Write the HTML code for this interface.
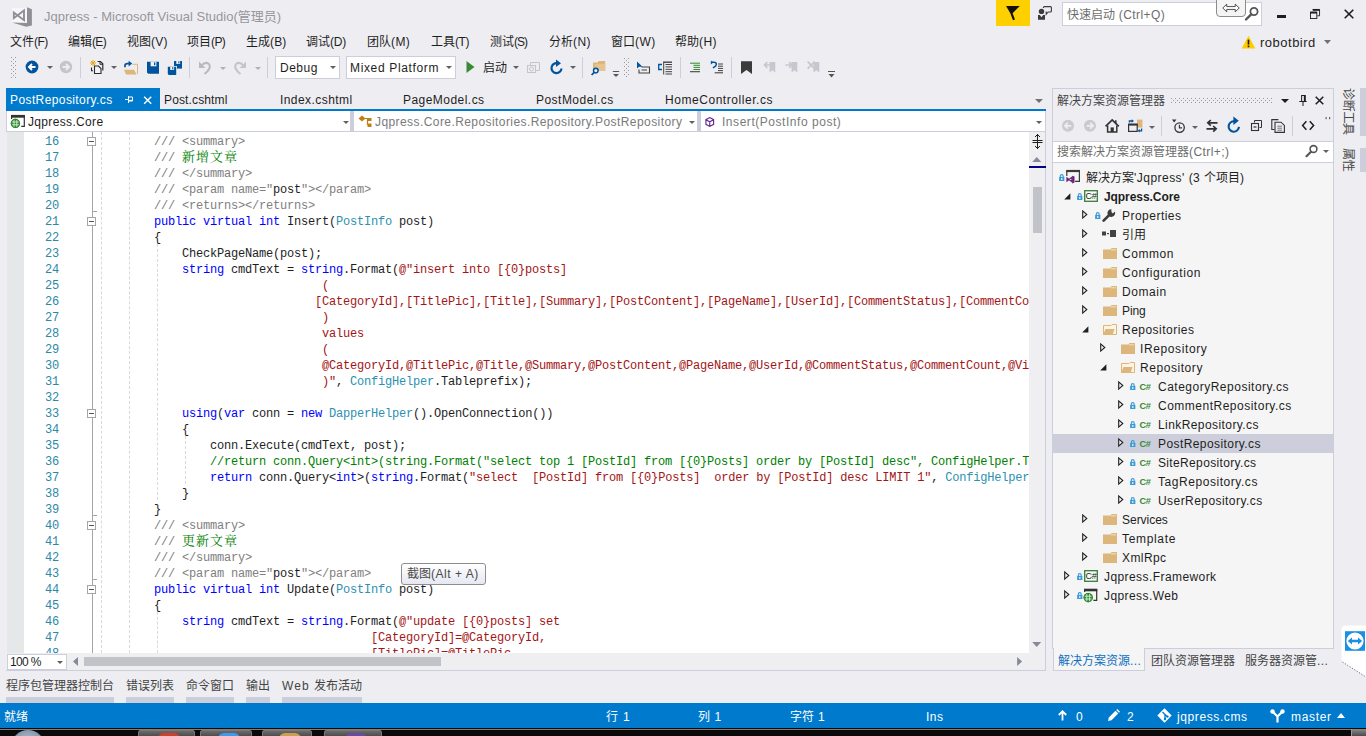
<!DOCTYPE html><html lang="zh-CN"><head><meta charset="utf-8"><title>Jqpress - Microsoft Visual Studio</title><style>
*{box-sizing:border-box;margin:0;padding:0}
html,body{width:1366px;height:736px;overflow:hidden;background:#eeeef2}
body{position:relative;font-family:"Liberation Sans","Noto Sans CJK SC",sans-serif;font-size:12px;color:#1e1e1e}
.a{position:absolute}
.t{position:absolute;white-space:nowrap;line-height:16px}
.l{letter-spacing:0.42px}
svg{position:absolute;overflow:visible}
.menu .t{font-size:12px;top:34px}
.tab{position:absolute;top:92px;font-size:12px;white-space:nowrap;line-height:16px}
.code{position:absolute;font-family:"Liberation Mono","Noto Serif CJK SC",monospace;font-size:12px;letter-spacing:-0.2px;white-space:pre;line-height:16px;height:16px}
.code .cj{font-size:13px;letter-spacing:1px}
.ln{position:absolute;left:19px;width:33px;text-align:right;font-family:"Liberation Mono","Noto Serif CJK SC",monospace;font-size:12px;letter-spacing:-0.2px;color:#2b89a6;line-height:16px;height:16px}
.k{color:#0000ff}.s{color:#a31515}.c{color:#008000}.x{color:#808080}.y{color:#2b91af}
.tree{position:absolute;left:1053px;width:280px;height:19px;line-height:19px;font-size:12px;white-space:nowrap}
.tree .t{line-height:19px;top:1px}
.sb .t{color:#fff;font-size:12px;top:709px}
#bt4 .l{letter-spacing:1.06px}#debug .l{letter-spacing:0.49px}#m0 .l{letter-spacing:-0.57px}#m1 .l{letter-spacing:-0.66px}#m2 .l{letter-spacing:0.19px}#m3 .l{letter-spacing:-0.61px}#m4 .l{letter-spacing:0.14px}#m5 .l{letter-spacing:-0.18px}#m7 .l{letter-spacing:-0.47px}#m8 .l{letter-spacing:-1.01px}#mixed .l{letter-spacing:0.65px}#nav0 .l{letter-spacing:0.34px}#nav1 .l{letter-spacing:0.42px}#nav2 .l{letter-spacing:0.54px}#sb1 .l{letter-spacing:1.58px}#sb2 .l{letter-spacing:1.27px}#sb3 .l{letter-spacing:0.67px}#sb4 .l{letter-spacing:0.49px}#sb7 .l{letter-spacing:0.60px}#sb8 .l{letter-spacing:0.66px}#tab0 .l{letter-spacing:0.40px}#tab1 .l{letter-spacing:0.13px}#tab2 .l{letter-spacing:0.43px}#tab3 .l{letter-spacing:0.46px}#tab4 .l{letter-spacing:0.47px}#tab5 .l{letter-spacing:0.55px}#tip .l{letter-spacing:0.52px}#title .l{letter-spacing:0.01px}#tr0 .l{letter-spacing:0.47px}#tr1 .l{letter-spacing:-0.07px}#tr10 .l{letter-spacing:0.56px}#tr11 .l{letter-spacing:0.50px}#tr12 .l{letter-spacing:0.50px}#tr15 .l{letter-spacing:0.35px}#tr16 .l{letter-spacing:0.55px}#tr17 .l{letter-spacing:0.44px}#tr18 .l{letter-spacing:-0.02px}#tr19 .l{letter-spacing:0.67px}#tr2 .l{letter-spacing:0.48px}#tr4 .l{letter-spacing:0.56px}#tr5 .l{letter-spacing:0.58px}#tr6 .l{letter-spacing:0.56px}#tr7 .l{letter-spacing:-0.11px}#tr8 .l{letter-spacing:0.48px}#tr9 .l{letter-spacing:0.61px}#user .l{letter-spacing:0.50px}#zoom .l{letter-spacing:-0.68px}</style></head><body>
<div class="a" style="left:0;top:0;width:1366px;height:31px;background:#eeeef2"></div>
<svg style="left:0;top:0" width="40" height="32" viewBox="0 0 40 32"><rect x="12" y="8" width="15" height="15" fill="#f7f7f9"/><path d="M13.8 12.6 L24 20.2 V10.4 L13.8 18.2 Z" fill="none" stroke="#8f8f97" stroke-width="1.9" stroke-linejoin="miter"/><path d="M27 7.2 L31.9 9.3 V25.5 L26.2 26.7 L12 22.5 L27 23 Z" fill="#8f8f97"/></svg>
<div class="t" id="title" style="left:44px;top:9px;font-size:13px;color:#96969c"><span class="l">Jqpress - Microsoft Visual Studio(</span>管理员<span class="l">)</span></div>
<div class="a" style="left:996px;top:0;width:34px;height:26px;background:#ffd000"></div>
<svg style="left:990px;top:0" width="80" height="30" viewBox="990 0 80 30"><path d="M1006 6 H1019.8 L1012.6 13.2 L1015 19.6 L1013 20.3 L1010.2 13 Z" fill="#151008"/><circle cx="1041.5" cy="11.4" r="2.7" fill="#3b3b3b"/><path d="M1038 15 H1039.8 L1041.5 17.3 L1043.2 15 H1045 V19.7 H1038 Z" fill="#3b3b3b"/><path d="M1043.4 8 V7.6 Q1043.4 6.6 1044.4 6.6 H1050.4 Q1051.4 6.6 1051.4 7.6 V11 Q1051.4 12 1050.4 12 H1048.2 L1046.2 14.3 V12 H1045.6" fill="none" stroke="#3b3b3b" stroke-width="1.1"/></svg>
<div class="a" style="left:1062px;top:2px;width:200px;height:24px;background:#fff;border:1px solid #cccedb"></div>
<div class="t" id="ql" style="left:1067px;top:7px;font-size:12px;color:#6d6d6d">快速启动<span class="l"> (Ctrl+Q)</span></div>
<svg style="left:1244px;top:6px" width="16" height="16" viewBox="0 0 16 16"><circle cx="10" cy="5.5" r="3.6" fill="none" stroke="#555" stroke-width="1.8"/><path d="M7.2 8.3 L2 13.5" stroke="#555" stroke-width="2.4" stroke-linecap="round"/></svg>
<div class="a" style="left:1216px;top:-4px;width:30px;height:21px;background:#f4f4f4;border:1px solid #8c8c8c;border-radius:4px"></div>
<svg style="left:1222px;top:2.5px" width="18" height="10" viewBox="0 0 19 10"><path d="M0.8 5 L5 1 V3.5 H14 V1 L18.2 5 L14 9 V6.5 H5 V9 Z" fill="#fff" stroke="#333" stroke-width="0.9"/></svg>
<div class="a" style="left:1277px;top:15px;width:9px;height:3px;background:#1e1e1e"></div>
<svg style="left:1310px;top:9px" width="10" height="10" viewBox="0 0 11 11"><path d="M3 0.5 H10.5 V7.5 H8" fill="none" stroke="#1e1e1e" stroke-width="1"/><path d="M3 1 H10.5" stroke="#1e1e1e" stroke-width="2"/><rect x="0.5" y="3.5" width="7" height="7" fill="none" stroke="#1e1e1e"/><path d="M0.5 4 H7.5" stroke="#1e1e1e" stroke-width="2"/></svg>
<svg style="left:1344px;top:9px" width="10" height="10" viewBox="0 0 10 10"><path d="M0.7 0.7 L9.3 9.3 M9.3 0.7 L0.7 9.3" stroke="#1e1e1e" stroke-width="1.6"/></svg>
<div class="menu">
<div class="t" id="m0" style="left:10px">文件<span class="l">(F)</span></div>
<div class="t" id="m1" style="left:68px">编辑<span class="l">(E)</span></div>
<div class="t" id="m2" style="left:127px">视图<span class="l">(V)</span></div>
<div class="t" id="m3" style="left:187px">项目<span class="l">(P)</span></div>
<div class="t" id="m4" style="left:246px">生成<span class="l">(B)</span></div>
<div class="t" id="m5" style="left:306px">调试<span class="l">(D)</span></div>
<div class="t" id="m6" style="left:367px">团队<span class="l">(M)</span></div>
<div class="t" id="m7" style="left:431px">工具<span class="l">(T)</span></div>
<div class="t" id="m8" style="left:490px">测试<span class="l">(S)</span></div>
<div class="t" id="m9" style="left:549px">分析<span class="l">(N)</span></div>
<div class="t" id="m10" style="left:611px">窗口<span class="l">(W)</span></div>
<div class="t" id="m11" style="left:675px">帮助<span class="l">(H)</span></div>
</div>
<svg style="left:1240.5px;top:35px" width="15" height="14.5" viewBox="0 0 14 14"><path d="M7 0.8 L13.6 13 H0.4 Z" fill="#ffcc00"/><path d="M7 4.5 V9.3" stroke="#1e1e1e" stroke-width="1.6"/><rect x="6.2" y="10.2" width="1.6" height="1.6" fill="#1e1e1e"/></svg>
<div class="t" id="user" style="left:1260px;top:35px;font-size:13px;color:#1e1e1e"><span class="l">robotbird</span></div>
<svg style="left:1324px;top:40px" width="7" height="4" viewBox="0 0 7 4"><path d="M0 0 H7 L3.5 4 Z" fill="#717171"/></svg>
<svg style="left:11px;top:57px" width="6" height="21"><defs><pattern id="gp11" width="4" height="4" patternUnits="userSpaceOnUse"><rect x="0" y="0" width="1" height="1" fill="#999"/><rect x="2" y="2" width="1" height="1" fill="#999"/></pattern></defs><rect width="6" height="21" fill="url(#gp11)"/></svg>
<svg style="left:25px;top:60px" width="14" height="14" viewBox="0 0 14 14"><circle cx="7" cy="7" r="6.4" fill="#00539c"/><path d="M10.5 7 H4.5 M7 4 L4 7 L7 10" fill="none" stroke="#fff" stroke-width="1.9"/></svg>
<svg style="left:46.5px;top:66px" width="6" height="3" viewBox="0 0 6 3"><path d="M0 0 H6 L3 3 Z" fill="#616161"/></svg>
<svg style="left:59px;top:60px" width="14" height="14" viewBox="0 0 14 14"><circle cx="7" cy="7" r="6.2" fill="#c3c4cc"/><path d="M3.5 7 H9.5 M7 4 L10 7 L7 10" fill="none" stroke="#eeeef2" stroke-width="1.9"/></svg>
<div class="a" style="left:80px;top:57px;width:1px;height:21px;background:#cccedb"></div>
<svg style="left:86px;top:54px" width="104" height="28" viewBox="86 54 104 28"><path d="M93 60 V66 M90 63 H96 M90.9 60.9 L95.1 65.1 M95.1 60.9 L90.9 65.1" stroke="#e8a317" stroke-width="1"/><path d="M97.5 61.5 H100.5 L102.8 63.8 V70.5" fill="none" stroke="#2b2b2b" stroke-width="1.2"/><path d="M100 61.5 V64.3 H102.8" fill="none" stroke="#2b2b2b" stroke-width="1"/><path d="M94.5 66 H98.5 L101 68.5 V73.5 H94.5 Z" fill="#f3f3f6" stroke="#2b2b2b" stroke-width="1.1"/><path d="M91.5 67.5 V70.8 H93" fill="none" stroke="#2b2b2b" stroke-width="1.1"/><path d="M132.5 64.3 H137.5 V74" fill="none" stroke="#dcb67a" stroke-width="1"/><path d="M124 69.8 H134 L136.6 74.5 H126 Z" fill="#dcb67a"/><path d="M125 67.2 V65.6 Q125 63.6 127.5 63.6 H129.3" fill="none" stroke="#00539c" stroke-width="1.7"/><path d="M128.6 60.8 L132.2 63.6 L128.6 66.4 Z" fill="#00539c"/><path d="M147 61.7 H159 V73.8 H148.3 L147 72.5 Z" fill="#00539c"/><rect x="150.6" y="61.7" width="5.8" height="4.6" fill="#f3f3f6"/><rect x="154" y="62.4" width="1.3" height="2.8" fill="#00539c"/><path d="M174 61 H182 V68.6 H174 Z" fill="#00539c"/><rect x="176.3" y="61" width="3.8" height="2.9" fill="#f3f3f6"/><rect x="178.3" y="61.3" width="1.1" height="2" fill="#00539c"/><path d="M167 66 H177 V75.6 H167 Z" fill="#eeeef2"/><path d="M167.8 66.8 H176.2 V75 H168.8 L167.8 74 Z" fill="#00539c"/><rect x="170.2" y="66.8" width="3.9" height="3.1" fill="#f3f3f6"/><rect x="172.2" y="67.2" width="1.1" height="2.1" fill="#00539c"/></svg>
<svg style="left:110.5px;top:66px" width="6" height="3" viewBox="0 0 6 3"><path d="M0 0 H6 L3 3 Z" fill="#616161"/></svg>
<div class="a" style="left:189px;top:57px;width:1px;height:21px;background:#cccedb"></div>
<svg style="left:198px;top:60px" width="14" height="15" viewBox="0 0 14 15"><path d="M3 6 Q7 1 11 4 Q14 8 6.5 14" fill="none" stroke="#b8b9c2" stroke-width="2"/><path d="M1 1.5 V8 H7.5 Z" fill="#b8b9c2"/></svg>
<svg style="left:219.5px;top:67px" width="6" height="3" viewBox="0 0 6 3"><path d="M0 0 H6 L3 3 Z" fill="#b0b1ba"/></svg>
<svg style="left:233px;top:60px" width="14" height="15" viewBox="0 0 14 15"><path d="M11 6 Q7 1 3 4 Q0 8 7.5 14" fill="none" stroke="#c3c4cc" stroke-width="2"/><path d="M13 1.5 V8 H6.5 Z" fill="#c3c4cc"/></svg>
<svg style="left:254.5px;top:67px" width="6" height="3" viewBox="0 0 6 3"><path d="M0 0 H6 L3 3 Z" fill="#b0b1ba"/></svg>
<div class="a" style="left:267px;top:57px;width:1px;height:21px;background:#cccedb"></div>
<div class="a" style="left:275px;top:56px;width:65px;height:23px;background:#fff;border:1px solid #cccedb"></div>
<div class="t" id="debug" style="left:280px;top:60px;font-size:12px"><span class="l">Debug</span></div>
<svg style="left:329.5px;top:66px" width="6" height="3" viewBox="0 0 6 3"><path d="M0 0 H6 L3 3 Z" fill="#616161"/></svg>
<div class="a" style="left:346px;top:56px;width:110px;height:23px;background:#fff;border:1px solid #cccedb"></div>
<div class="t" id="mixed" style="left:350px;top:60px;font-size:12px"><span class="l">Mixed Platform</span></div>
<svg style="left:445.5px;top:66px" width="6" height="3" viewBox="0 0 6 3"><path d="M0 0 H6 L3 3 Z" fill="#616161"/></svg>
<svg style="left:466px;top:61px" width="9" height="12" viewBox="0 0 9 12"><path d="M0.5 0 L8.5 6 L0.5 12 Z" fill="#388a34"/></svg>
<div class="t" id="start" style="left:483px;top:60px;font-size:12px">启动</div>
<svg style="left:512.5px;top:66px" width="6" height="3" viewBox="0 0 6 3"><path d="M0 0 H6 L3 3 Z" fill="#616161"/></svg>
<svg style="left:527px;top:62px" width="13" height="11" viewBox="0 0 13 11"><path d="M3.5 3 V0.5 H12.5 V8.5 H9" fill="none" stroke="#c3c4cc"/><rect x="0.5" y="3.5" width="8" height="7" fill="none" stroke="#c3c4cc"/><circle cx="4.5" cy="7" r="2" fill="none" stroke="#c3c4cc"/></svg>
<svg style="left:549px;top:59px" width="15" height="16" viewBox="0 0 15 16"><path d="M8.5 4.2 A5 5 0 1 0 12.5 9.5" fill="none" stroke="#00539c" stroke-width="2.2"/><path d="M7 0.5 L12 4.2 L7 8 Z" fill="#00539c"/></svg>
<svg style="left:569.5px;top:66px" width="6" height="3" viewBox="0 0 6 3"><path d="M0 0 H6 L3 3 Z" fill="#616161"/></svg>
<svg style="left:580px;top:54px" width="160" height="28" viewBox="580 54 160 28"><path d="M593 62.5 H597.5 L598.5 61 H605.2 V71 H593 Z" fill="#dcb67a"/><path d="M595 64 H605.2 V71 H595 Z" fill="#e5c48f"/><circle cx="595.8" cy="70.6" r="2.3" fill="#eeeef2" stroke="#00539c" stroke-width="1.5"/><path d="M594.2 72.3 L591.6 75" stroke="#00539c" stroke-width="1.8"/><path d="M612.8 71.5 H619.2" stroke="#555" stroke-width="1"/><path d="M613 74 H619 L616 77 Z" fill="#555"/><path d="M637 61.5 V68.5 L639 66.8 H642.5 Z" fill="#00539c"/><path d="M641.5 67 H649.5 V73 H639 V69.5" fill="none" stroke="#424242" stroke-width="1.1"/><path d="M641.5 70 H647" stroke="#424242" stroke-width="1"/><path d="M662 64.5 H658.7 V69.5 H662" fill="none" stroke="#00539c" stroke-width="1.3"/><path d="M663.7 61.5 V74.5" stroke="#424242" stroke-width="1"/><path d="M663.7 62.2 H672" stroke="#424242" stroke-width="1.4"/><path d="M665.5 64.5 H672 M665.5 66.9 H672 M665.5 69.3 H672 M665.5 71.7 H672 M665.5 74 H672" stroke="#424242" stroke-width="1"/><path d="M690 63.2 H700 M693.5 65.3 H700 M693.5 67.4 H700 M693.5 69.5 H700" stroke="#2d8a2d" stroke-width="1"/><path d="M690 71.7 H700" stroke="#424242" stroke-width="1.1"/><path d="M711.5 62.3 H714 Q716.3 62.3 716.3 64.3 Q716.3 66 714.3 67 L713 68" fill="none" stroke="#00539c" stroke-width="1.5"/><path d="M710.8 60.6 V64.6 L713.3 62.6 Z" fill="#00539c"/><path d="M718 64 H723 M718 66.2 H723 M718 68.4 H723 M718 70.6 H723" stroke="#424242" stroke-width="1"/><path d="M714.7 72.8 H723" stroke="#424242" stroke-width="1.1"/></svg>
<svg style="left:624px;top:58px" width="6" height="20"><defs><pattern id="gp624" width="4" height="4" patternUnits="userSpaceOnUse"><rect x="0" y="0" width="1" height="1" fill="#999"/><rect x="2" y="2" width="1" height="1" fill="#999"/></pattern></defs><rect width="6" height="20" fill="url(#gp624)"/></svg>
<div class="a" style="left:582px;top:57px;width:1px;height:21px;background:#cccedb"></div>
<div class="a" style="left:680px;top:57px;width:1px;height:21px;background:#cccedb"></div>
<div class="a" style="left:731px;top:57px;width:1px;height:21px;background:#cccedb"></div>
<svg style="left:741px;top:61px" width="11" height="13.4" viewBox="0 0 12 14"><path d="M0 0 H12 V14 L6 9.5 L0 14 Z" fill="#3b3b3b"/></svg>
<svg style="left:755px;top:54px" width="90" height="28" viewBox="755 54 90 28"><path d="M769.5 62 H775.3 V72.6 L772.4 70.2 L769.5 72.6 Z" fill="#c6c7cf"/><path d="M771 65 H764.6 M767.4 62.2 L764.4 65 L767.4 67.8" fill="none" stroke="#c6c7cf" stroke-width="1.6"/><path d="M791.5 62 H797.3 V72.6 L794.4 70.2 L791.5 72.6 Z" fill="#c6c7cf"/><path d="M785.4 65 H792 M789 62.2 L792 65 L789 67.8" fill="none" stroke="#c6c7cf" stroke-width="1.6"/><path d="M813.5 62 H819.3 V72.6 L816.4 70.2 L813.5 72.6 Z" fill="#c6c7cf"/><path d="M807.6 61.6 L814.6 68.6 M814.6 61.6 L807.6 68.6" fill="none" stroke="#c6c7cf" stroke-width="1.6"/></svg>
<svg style="left:828px;top:71px" width="7" height="7" viewBox="0 0 7 7"><path d="M0 0.5 H7" stroke="#555"/><path d="M0.5 3 H6.5 L3.5 6.5 Z" fill="#555"/></svg>
<div class="a" style="left:6px;top:88px;width:154px;height:21px;background:#007acc"></div>
<div class="tab" id="tab0" style="left:10px;color:#fff"><span class="l">PostRepository.cs</span></div>
<svg style="left:125px;top:96px" width="8" height="7" viewBox="0 0 8 7"><path d="M0 3.5 H3.5 M3.5 0 V7 M3.5 1 H7.5 V5 H3.5 M3.5 4.4 H7.5" fill="none" stroke="#fff" stroke-width="1"/></svg>
<svg style="left:143.4px;top:95.8px" width="9.4" height="8.4" viewBox="0 0 9 9"><path d="M0.7 0.7 L8.3 8.3 M8.3 0.7 L0.7 8.3" stroke="#fff" stroke-width="1.5"/></svg>
<div class="tab" id="tab1" style="left:164px"><span class="l">Post.cshtml</span></div>
<div class="tab" id="tab2" style="left:280px"><span class="l">Index.cshtml</span></div>
<div class="tab" id="tab3" style="left:403px"><span class="l">PageModel.cs</span></div>
<div class="tab" id="tab4" style="left:536px"><span class="l">PostModel.cs</span></div>
<div class="tab" id="tab5" style="left:665px"><span class="l">HomeController.cs</span></div>
<svg style="left:1035px;top:99px" width="8" height="4" viewBox="0 0 8 4"><path d="M0 0 H8 L4 4 Z" fill="#717171"/></svg>
<div class="a" style="left:6px;top:109px;width:1040px;height:2px;background:#007acc"></div>
<div class="a" style="left:6px;top:111px;width:1040px;height:21px;background:#fff;border-bottom:1px solid #cccedb;border-left:1px solid #cccedb;border-right:1px solid #cccedb"></div>
<div class="a" style="left:350px;top:111px;width:4px;height:20px;background:#cccedb"></div>
<div class="a" style="left:697px;top:111px;width:4px;height:20px;background:#cccedb"></div>
<svg style="left:4px;top:110px" width="40" height="24" viewBox="4 110 40 24"><path d="M11.6 119 V116 H24.3 V126.3 H21.2" fill="none" stroke="#333" stroke-width="1.2"/><path d="M11 116.3 H24.9" stroke="#333" stroke-width="2.8"/><circle cx="15.4" cy="123.4" r="4.6" fill="#2e8b2e"/><path d="M14 119.6 V127.2 M16.8 119.6 V127.2 M11.4 122 H19.4 M11.4 124.8 H19.4" stroke="#fff" stroke-width="0.9" opacity="0.85"/><circle cx="15.4" cy="123.4" r="4.2" fill="none" stroke="#2e8b2e" stroke-width="1"/></svg>
<div class="t" id="nav0" style="left:28px;top:114px;color:#1e1e1e"><span class="l">Jqpress.Core</span></div>
<svg style="left:342.5px;top:121px" width="6" height="3" viewBox="0 0 6 3"><path d="M0 0 H6 L3 3 Z" fill="#616161"/></svg>
<svg style="left:358px;top:115px" width="14" height="13" viewBox="0 0 14 13"><path d="M4 0.5 L7.5 3.5 L4 6.5 L0.5 3.5 Z" fill="#c27d1a"/><path d="M7 3.5 H9.5 V9.5 H11" fill="none" stroke="#c27d1a" stroke-width="1.2"/><rect x="9.5" y="3" width="4" height="3" fill="#c27d1a"/><rect x="9.5" y="8.5" width="4" height="3.5" fill="#c27d1a"/></svg>
<div class="t" id="nav1" style="left:375px;top:114px;color:#7a7a7a"><span class="l">Jqpress.Core.Repositories.Repository.PostRepository</span></div>
<svg style="left:688.5px;top:121px" width="6" height="3" viewBox="0 0 6 3"><path d="M0 0 H6 L3 3 Z" fill="#616161"/></svg>
<svg style="left:705px;top:116.5px" width="9.5" height="10" viewBox="0 0 12 13"><path d="M6 0.8 L11 3.5 V9.5 L6 12.2 L1 9.5 V3.5 Z M1 3.5 L6 6.3 L11 3.5 M6 6.3 V12.2" fill="none" stroke="#652d90" stroke-width="1.5"/></svg>
<div class="t" id="nav2" style="left:722px;top:114px;color:#7a7a7a"><span class="l">Insert(PostInfo post)</span></div>
<svg style="left:1035.5px;top:121px" width="6" height="3" viewBox="0 0 6 3"><path d="M0 0 H6 L3 3 Z" fill="#616161"/></svg>
<div class="a" id="ed" style="left:7px;top:132px;width:1022px;height:521px;background:#fff;overflow:hidden">
<div class="a" style="left:0;top:0;width:17px;height:521px;background:#e6e7e8"></div>
<div class="a" style="left:85px;top:0;width:1px;height:522px;background:#a5a5a5"></div>
<div class="a" style="left:94px;top:0;width:0;height:521px;border-left:1px dashed #d9d9d9"></div>
<div class="a" style="left:122px;top:0;width:0;height:521px;border-left:1px dashed #d9d9d9"></div>
<div class="a" style="left:150px;top:112px;width:0;height:256px;border-left:1px dashed #d9d9d9"></div>
<div class="a" style="left:150px;top:480px;width:0;height:41px;border-left:1px dashed #d9d9d9"></div>
<div class="a" style="left:178px;top:304px;width:0;height:48px;border-left:1px dashed #d9d9d9"></div>
<div class="ln" style="top:2px">16</div>
<div class="a" style="left:80px;top:5px;width:9px;height:9px;background:#fff;border:1px solid #a5a5a5"></div><div class="a" style="left:82px;top:9px;width:5px;height:1px;background:#555"></div>
<div class="code" style="left:147px;top:2px"><span class="x">/// &lt;summary&gt;</span></div>
<div class="ln" style="top:18px">17</div>
<div class="code" style="left:147px;top:18px"><span class="x">/// </span><span class="c"><span class="cj">新增文章</span></span></div>
<div class="ln" style="top:34px">18</div>
<div class="code" style="left:147px;top:34px"><span class="x">/// &lt;/summary&gt;</span></div>
<div class="ln" style="top:50px">19</div>
<div class="code" style="left:147px;top:50px"><span class="x">/// &lt;param name="</span>post<span class="x">"&gt;&lt;/param&gt;</span></div>
<div class="ln" style="top:66px">20</div>
<div class="code" style="left:147px;top:66px"><span class="x">/// &lt;returns&gt;&lt;/returns&gt;</span></div>
<div class="ln" style="top:82px">21</div>
<div class="a" style="left:80px;top:85px;width:9px;height:9px;background:#fff;border:1px solid #a5a5a5"></div><div class="a" style="left:82px;top:89px;width:5px;height:1px;background:#555"></div>
<div class="code" style="left:147px;top:82px"><span class="k">public virtual int</span> Insert(<span class="y">PostInfo</span> post)</div>
<div class="ln" style="top:98px">22</div>
<div class="code" style="left:147px;top:98px">{</div>
<div class="ln" style="top:114px">23</div>
<div class="code" style="left:175px;top:114px">CheckPageName(post);</div>
<div class="ln" style="top:130px">24</div>
<div class="code" style="left:175px;top:130px"><span class="k">string</span> cmdText = <span class="k">string</span>.Format(<span class="s">@"insert into [{0}posts]</span></div>
<div class="ln" style="top:146px">25</div>
<div class="code" style="left:315px;top:146px"><span class="s">(</span></div>
<div class="ln" style="top:162px">26</div>
<div class="code" style="left:308px;top:162px"><span class="s">[CategoryId],[TitlePic],[Title],[Summary],[PostContent],[PageName],[UserId],[CommentStatus],[CommentCount],[ViewCount],[Tag],[UrlFormat],[Template],[Recommend],[Status],[TopStatus],[HideStatus],[CreateDate],[UpdateDate]</span></div>
<div class="ln" style="top:178px">27</div>
<div class="code" style="left:315px;top:178px"><span class="s">)</span></div>
<div class="ln" style="top:194px">28</div>
<div class="code" style="left:315px;top:194px"><span class="s">values</span></div>
<div class="ln" style="top:210px">29</div>
<div class="code" style="left:315px;top:210px"><span class="s">(</span></div>
<div class="ln" style="top:226px">30</div>
<div class="code" style="left:315px;top:226px"><span class="s">@CategoryId,@TitlePic,@Title,@Summary,@PostContent,@PageName,@UserId,@CommentStatus,@CommentCount,@ViewCount,@Tag,@UrlFormat,@Template,@Recommend,@Status,@TopStatus,@HideStatus,@CreateDate,@UpdateDate</span></div>
<div class="ln" style="top:242px">31</div>
<div class="code" style="left:315px;top:242px"><span class="s">)"</span>, <span class="y">ConfigHelper</span>.Tableprefix);</div>
<div class="ln" style="top:258px">32</div>
<div class="ln" style="top:274px">33</div>
<div class="a" style="left:80px;top:277px;width:9px;height:9px;background:#fff;border:1px solid #a5a5a5"></div><div class="a" style="left:82px;top:281px;width:5px;height:1px;background:#555"></div>
<div class="code" style="left:175px;top:274px"><span class="k">using</span>(<span class="k">var</span> conn = <span class="k">new</span> <span class="y">DapperHelper</span>().OpenConnection())</div>
<div class="ln" style="top:290px">34</div>
<div class="code" style="left:175px;top:290px">{</div>
<div class="ln" style="top:306px">35</div>
<div class="code" style="left:203px;top:306px">conn.Execute(cmdText, post);</div>
<div class="ln" style="top:322px">36</div>
<div class="code" style="left:203px;top:322px"><span class="c">//return conn.Query&lt;int&gt;(string.Format("select top 1 [PostId] from [{0}Posts] order by [PostId] desc", ConfigHelper.Tableprefix)).First();</span></div>
<div class="ln" style="top:338px">37</div>
<div class="code" style="left:203px;top:338px"><span class="k">return</span> conn.Query&lt;<span class="k">int</span>&gt;(<span class="k">string</span>.Format(<span class="s">"select  [PostId] from [{0}Posts]  order by [PostId] desc LIMIT 1"</span>, <span class="y">ConfigHelper</span>.Tableprefix)).First();</div>
<div class="ln" style="top:354px">38</div>
<div class="code" style="left:175px;top:354px">}</div>
<div class="ln" style="top:370px">39</div>
<div class="code" style="left:147px;top:370px">}</div>
<div class="ln" style="top:386px">40</div>
<div class="a" style="left:80px;top:389px;width:9px;height:9px;background:#fff;border:1px solid #a5a5a5"></div><div class="a" style="left:82px;top:393px;width:5px;height:1px;background:#555"></div>
<div class="code" style="left:147px;top:386px"><span class="x">/// &lt;summary&gt;</span></div>
<div class="ln" style="top:402px">41</div>
<div class="code" style="left:147px;top:402px"><span class="x">/// </span><span class="c"><span class="cj">更新文章</span></span></div>
<div class="ln" style="top:418px">42</div>
<div class="code" style="left:147px;top:418px"><span class="x">/// &lt;/summary&gt;</span></div>
<div class="ln" style="top:434px">43</div>
<div class="code" style="left:147px;top:434px"><span class="x">/// &lt;param name="</span>post<span class="x">"&gt;&lt;/param&gt;</span></div>
<div class="ln" style="top:450px">44</div>
<div class="a" style="left:80px;top:453px;width:9px;height:9px;background:#fff;border:1px solid #a5a5a5"></div><div class="a" style="left:82px;top:457px;width:5px;height:1px;background:#555"></div>
<div class="code" style="left:147px;top:450px"><span class="k">public virtual int</span> Update(<span class="y">PostInfo</span> post)</div>
<div class="ln" style="top:466px">45</div>
<div class="code" style="left:147px;top:466px">{</div>
<div class="ln" style="top:482px">46</div>
<div class="code" style="left:175px;top:482px"><span class="k">string</span> cmdText = <span class="k">string</span>.Format(<span class="s">@"update [{0}posts] set</span></div>
<div class="ln" style="top:498px">47</div>
<div class="code" style="left:364px;top:498px"><span class="s">[CategoryId]=@CategoryId,</span></div>
<div class="ln" style="top:514px">48</div>
<div class="code" style="left:364px;top:514px"><span class="s">[TitlePic]=@TitlePic,</span></div>
<div class="a" style="left:85px;top:79px;width:5px;height:1px;background:#a5a5a5"></div>
<div class="a" style="left:85px;top:383px;width:5px;height:1px;background:#a5a5a5"></div>
<div class="a" style="left:85px;top:447px;width:5px;height:1px;background:#a5a5a5"></div>
<div class="a" style="left:394px;top:431px;width:85px;height:22px;background:linear-gradient(#fff,#e6e7f2);border:1px solid #8e8e8e;border-radius:3px"></div>
<div class="t" id="tip" style="left:400px;top:434px;color:#4a4a4a">截图<span class="l">(Alt + A)</span></div>
</div>
<div class="a" style="left:1029px;top:132px;width:17px;height:539px;background:#efeff2;border-right:1px solid #cccedb;border-bottom:1px solid #cccedb"></div>
<svg style="left:1032px;top:134px" width="11" height="15" viewBox="0 0 11 15"><path d="M0.5 6.5 H10.5 M0.5 8.5 H10.5" stroke="#1e1e1e" stroke-width="1"/><path d="M5.5 0 V15" stroke="#1e1e1e"/><path d="M3 3 L5.5 0.5 L8 3 M3 12 L5.5 14.5 L8 12" fill="none" stroke="#1e1e1e"/></svg>
<svg style="left:1032px;top:156.5px" width="9.5" height="5" viewBox="0 0 9 5"><path d="M0 5 H9 L4.5 0 Z" fill="#868999"/></svg>
<div class="a" style="left:1029px;top:166px;width:17px;height:2px;background:#00008b"></div>
<div class="a" style="left:1033px;top:187px;width:9px;height:46px;background:#c2c3c9"></div>
<svg style="left:1032.3px;top:642px" width="9.4" height="5" viewBox="0 0 9 5"><path d="M0 0 H9 L4.5 5 Z" fill="#868999"/></svg>
<div class="a" style="left:6px;top:653px;width:1023px;height:18px;background:#efeff2;border-bottom:1px solid #cccedb"></div>
<div class="a" style="left:7px;top:654px;width:60px;height:16px;background:#fff;border:1px solid #cccedb"></div>
<div class="t" id="zoom" style="left:10px;top:654px;font-size:12px"><span class="l">100 %</span></div>
<svg style="left:56.5px;top:661px" width="6" height="3" viewBox="0 0 6 3"><path d="M0 0 H6 L3 3 Z" fill="#616161"/></svg>
<svg style="left:73px;top:657px" width="5" height="9" viewBox="0 0 5 9"><path d="M5 0 V9 L0 4.5 Z" fill="#868999"/></svg>
<div class="a" style="left:84px;top:657px;width:357px;height:9px;background:#c2c3c9"></div>
<svg style="left:1017px;top:657px" width="5.2" height="9" viewBox="0 0 5 9"><path d="M0 0 V9 L5 4.5 Z" fill="#868999"/></svg>
<div class="a" style="left:1052px;top:88px;width:282px;height:583px;background:#eeeef2"></div>
<div class="a" style="left:1052px;top:88px;width:282px;height:561px;border:1px solid #cccedb"></div>
<div class="t" id="setitle" style="left:1057px;top:93px;color:#444">解决方案资源管理器</div>
<svg style="left:1171px;top:98px" width="102" height="5"><defs><pattern id="gpt" width="4" height="4" patternUnits="userSpaceOnUse"><rect x="0" y="0" width="1" height="1" fill="#999"/><rect x="2" y="2" width="1" height="1" fill="#999"/></pattern></defs><rect width="102" height="5" fill="url(#gpt)"/></svg>
<svg style="left:1281px;top:99px" width="8" height="4" viewBox="0 0 8 4"><path d="M0 0 H8 L4 4 Z" fill="#1e1e1e"/></svg>
<svg style="left:1298.5px;top:95px" width="8" height="11" viewBox="0 0 8 12"><path d="M2 0.5 H6.5 V7 M2.5 0.5 V7 M5.5 0.5 V7 M0 7.2 H8 M4 7.5 V12" fill="none" stroke="#1e1e1e" stroke-width="1.1"/></svg>
<svg style="left:1315px;top:96px" width="9" height="9" viewBox="0 0 9 9"><path d="M0.7 0.7 L8.3 8.3 M8.3 0.7 L0.7 8.3" stroke="#1e1e1e" stroke-width="1.5"/></svg>
<svg style="left:1052px;top:108px" width="290" height="34" viewBox="1052 108 290 34"><circle cx="1068" cy="125.8" r="6" fill="#c9cad2"/><path d="M1071.3 125.8 H1065.3 M1067.8 122.9 L1064.9 125.8 L1067.8 128.7" fill="none" stroke="#eeeef2" stroke-width="1.8"/><circle cx="1090" cy="125.8" r="6" fill="#c9cad2"/><path d="M1086.7 125.8 H1092.7 M1090.2 122.9 L1093.1 125.8 L1090.2 128.7" fill="none" stroke="#eeeef2" stroke-width="1.8"/><path d="M1105.6 126.4 L1112.2 120 L1118.8 126.4" fill="none" stroke="#333" stroke-width="1.7"/><path d="M1107.6 125.5 V132 H1116.8 V125.5" fill="none" stroke="#333" stroke-width="1.5"/><rect x="1110.6" y="127.4" width="3.2" height="4.6" fill="#333"/><path d="M1115.8 120.2 V123.4" stroke="#333" stroke-width="1.5"/><rect x="1137" y="119.6" width="5.4" height="8" fill="#dcb67a"/><rect x="1128.6" y="124.4" width="8.6" height="7" fill="#eeeef2" stroke="#333" stroke-width="1.2"/><path d="M1128.2 124.6 H1137.6" stroke="#333" stroke-width="2"/><path d="M1129.4 122.6 V121 H1132" fill="none" stroke="#00539c" stroke-width="1.3"/><path d="M1131.6 119.2 L1134 121 L1131.6 122.8 Z" fill="#00539c"/><path d="M1141.6 128.6 V130.8 H1139.4" fill="none" stroke="#00539c" stroke-width="1.3"/><path d="M1139.8 129 L1137.4 130.8 L1139.8 132.6 Z" fill="#00539c"/><circle cx="1179.6" cy="127.6" r="4.7" fill="none" stroke="#333" stroke-width="1.3"/><path d="M1179.4 124.8 V127.9 H1182" fill="none" stroke="#333" stroke-width="1.1"/><path d="M1172 119.6 H1176.4 L1174.2 122.4 Z" fill="#333"/><path d="M1208.5 122.8 H1217.5 M1210.8 120 L1207.8 122.8 L1210.8 125.6" fill="none" stroke="#333" stroke-width="1.7"/><path d="M1206.5 128.8 H1215.5 M1213.2 126 L1216.2 128.8 L1213.2 131.6" fill="none" stroke="#333" stroke-width="1.7"/><path d="M1234.8 121.4 A5.2 5.2 0 1 0 1239 126.9" fill="none" stroke="#00539c" stroke-width="2.1"/><path d="M1233.4 116.6 L1238.8 120.8 L1233.4 125 Z" fill="#00539c"/><path d="M1254.5 122.5 V120.5 H1261.5 V127.5 H1259.5" fill="none" stroke="#333" stroke-width="1"/><rect x="1251.5" y="123.5" width="7" height="7" fill="none" stroke="#333" stroke-width="1.1"/><path d="M1253.5 127 H1256.5" stroke="#333" stroke-width="1.2"/><path d="M1274.5 129.5 H1271.8 V119.6 H1278.4" fill="none" stroke="#333" stroke-width="1.1"/><path d="M1275 122.2 H1281 L1284.4 125.4 V132.4 H1275 Z" fill="none" stroke="#333" stroke-width="1.1"/><path d="M1277.4 126.2 H1282 M1277.4 128.2 H1282 M1277.4 130.2 H1282" stroke="#444" stroke-width="0.7"/><path d="M1306.4 121.2 L1302.6 125.5 L1306.4 129.8 M1309.8 121.2 L1313.6 125.5 L1309.8 129.8" fill="none" stroke="#1e1e1e" stroke-width="1.5"/><rect x="1325.5" y="117" width="1.2" height="2.2" fill="#666"/><rect x="1329" y="117" width="1.2" height="2.2" fill="#666"/></svg>
<svg style="left:1149.2px;top:125.5px" width="6" height="3" viewBox="0 0 6 3"><path d="M0 0 H6 L3 3 Z" fill="#616161"/></svg>
<svg style="left:1192px;top:125.5px" width="6" height="3" viewBox="0 0 6 3"><path d="M0 0 H6 L3 3 Z" fill="#616161"/></svg>
<div class="a" style="left:1161px;top:116px;width:1px;height:20px;background:#cccedb"></div>
<div class="a" style="left:1292px;top:116px;width:1px;height:20px;background:#cccedb"></div>
<div class="a" style="left:1053px;top:141px;width:280px;height:22px;background:#fff;border-top:1px solid #cccedb;border-bottom:1px solid #cccedb"></div>
<div class="t" id="sesearch" style="left:1057px;top:144px;color:#6d6d6d">搜索解决方案资源管理器<span class="l">(Ctrl+;)</span></div>
<svg style="left:1305px;top:144px" width="14" height="14" viewBox="0 0 14 14"><circle cx="8.5" cy="5" r="3.4" fill="none" stroke="#555" stroke-width="1.6"/><path d="M6 7.7 L1.5 12.2" stroke="#555" stroke-width="2.2" stroke-linecap="round"/></svg>
<svg style="left:1322.5px;top:150px" width="6" height="3" viewBox="0 0 6 3"><path d="M0 0 H6 L3 3 Z" fill="#616161"/></svg>
<div class="a" style="left:1053px;top:163px;width:280px;height:485px;background:#f5f5f5"></div>
<div class="tree" style="top:168px">
<svg style="left:6px;top:6px" width="5.5" height="7" viewBox="0 0 6 8"><path d="M1.4 3.6 V2.4 Q1.4 0.7 3 0.7 Q4.6 0.7 4.6 2.4 V3.6" fill="none" stroke="#3a9bd8" stroke-width="1.2"/><rect x="0" y="3.3" width="6" height="4.7" fill="#3a9bd8"/><rect x="2.1" y="4.8" width="1.8" height="1.8" fill="#f5f5f5"/></svg>
<svg style="left:12px;top:0" width="16" height="19" viewBox="0 0 16 19"><path d="M1.8 8 V3 H14.4 V13.3 H10" fill="none" stroke="#3b3b3b" stroke-width="1.2"/><path d="M1.2 3 H15" stroke="#3b3b3b" stroke-width="2.2"/><path d="M2 9.9 L7 13.7 V9.3 L2 13.1 Z" fill="none" stroke="#68217a" stroke-width="1.25"/><path d="M7.2 7.8 L9.5 8.6 V14.6 L7.2 15.4 Z" fill="#68217a"/></svg>
<div class="t" id="tr0" style="left:33px">解决方案<span class="l">'Jqpress' (3 </span>个项目<span class="l">)</span></div>
</div>
<div class="tree" style="top:187px">
<svg style="left:11px;top:5.5px" width="7" height="7" viewBox="0 0 7 7"><path d="M6.4 0.2 V6.4 H0.2 Z" fill="#1e1e1e"/></svg>
<svg style="left:24px;top:6px" width="5.5" height="7" viewBox="0 0 6 8"><path d="M1.4 3.6 V2.4 Q1.4 0.7 3 0.7 Q4.6 0.7 4.6 2.4 V3.6" fill="none" stroke="#3a9bd8" stroke-width="1.2"/><rect x="0" y="3.3" width="6" height="4.7" fill="#3a9bd8"/><rect x="2.1" y="4.8" width="1.8" height="1.8" fill="#f5f5f5"/></svg>
<svg style="left:30px;top:3px" width="15" height="13" viewBox="0 0 15 13"><rect x="1.7" y="0.7" width="12.6" height="10.6" fill="#f4faf4" stroke="#3a7a3a" stroke-width="1.3"/><text x="8" y="9.3" font-family="Liberation Sans,sans-serif" font-size="9" text-anchor="middle" fill="#222" letter-spacing="-0.3">C#</text></svg>
<div class="t" id="tr1" style="left:51px;font-weight:bold"><span class="l">Jqpress.Core</span></div>
</div>
<div class="tree" style="top:206px">
<svg style="left:29px;top:4px" width="6" height="9" viewBox="0 0 6 9"><path d="M0.7 0.9 V8.1 L4.8 4.5 Z" fill="#f5f5f5" stroke="#1e1e1e" stroke-width="1.1"/></svg>
<svg style="left:42px;top:6px" width="5.5" height="7" viewBox="0 0 6 8"><path d="M1.4 3.6 V2.4 Q1.4 0.7 3 0.7 Q4.6 0.7 4.6 2.4 V3.6" fill="none" stroke="#3a9bd8" stroke-width="1.2"/><rect x="0" y="3.3" width="6" height="4.7" fill="#3a9bd8"/><rect x="2.1" y="4.8" width="1.8" height="1.8" fill="#f5f5f5"/></svg>
<svg style="left:49px;top:3px" width="14" height="14" viewBox="0 0 14 14"><path d="M1.6 11.6 L7.6 5.6" stroke="#3b3b3b" stroke-width="2.7" stroke-linecap="round"/><path d="M12.9 2.6 A3.9 3.9 0 1 1 9.4 0.2 L9.4 3.1 L10.9 4.4 Z" fill="#3b3b3b"/></svg>
<div class="t" id="tr2" style="left:69px"><span class="l">Properties</span></div>
</div>
<div class="tree" style="top:225px">
<svg style="left:29px;top:4px" width="6" height="9" viewBox="0 0 6 9"><path d="M0.7 0.9 V8.1 L4.8 4.5 Z" fill="#f5f5f5" stroke="#1e1e1e" stroke-width="1.1"/></svg>
<svg style="left:49px;top:5px" width="14" height="7" viewBox="0 0 14 7"><rect x="0" y="1.5" width="4" height="4" fill="#424242"/><rect x="5" y="3" width="2" height="1.2" fill="#424242"/><rect x="8" y="0" width="6" height="7" fill="#424242"/></svg>
<div class="t" id="tr3" style="left:69px">引用</div>
</div>
<div class="tree" style="top:244px">
<svg style="left:29px;top:4px" width="6" height="9" viewBox="0 0 6 9"><path d="M0.7 0.9 V8.1 L4.8 4.5 Z" fill="#f5f5f5" stroke="#1e1e1e" stroke-width="1.1"/></svg>
<svg style="left:50px;top:3.5px" width="14" height="11" viewBox="0 0 14 11"><path d="M0 1.5 H7.5 L8.5 0 H14 V11 H0 Z" fill="#dcb67a"/><path d="M8 1.8 H13.2" stroke="#f3e3c0" stroke-width="1"/></svg>
<div class="t" id="tr4" style="left:69px"><span class="l">Common</span></div>
</div>
<div class="tree" style="top:263px">
<svg style="left:29px;top:4px" width="6" height="9" viewBox="0 0 6 9"><path d="M0.7 0.9 V8.1 L4.8 4.5 Z" fill="#f5f5f5" stroke="#1e1e1e" stroke-width="1.1"/></svg>
<svg style="left:50px;top:3.5px" width="14" height="11" viewBox="0 0 14 11"><path d="M0 1.5 H7.5 L8.5 0 H14 V11 H0 Z" fill="#dcb67a"/><path d="M8 1.8 H13.2" stroke="#f3e3c0" stroke-width="1"/></svg>
<div class="t" id="tr5" style="left:69px"><span class="l">Configuration</span></div>
</div>
<div class="tree" style="top:282px">
<svg style="left:29px;top:4px" width="6" height="9" viewBox="0 0 6 9"><path d="M0.7 0.9 V8.1 L4.8 4.5 Z" fill="#f5f5f5" stroke="#1e1e1e" stroke-width="1.1"/></svg>
<svg style="left:50px;top:3.5px" width="14" height="11" viewBox="0 0 14 11"><path d="M0 1.5 H7.5 L8.5 0 H14 V11 H0 Z" fill="#dcb67a"/><path d="M8 1.8 H13.2" stroke="#f3e3c0" stroke-width="1"/></svg>
<div class="t" id="tr6" style="left:69px"><span class="l">Domain</span></div>
</div>
<div class="tree" style="top:301px">
<svg style="left:29px;top:4px" width="6" height="9" viewBox="0 0 6 9"><path d="M0.7 0.9 V8.1 L4.8 4.5 Z" fill="#f5f5f5" stroke="#1e1e1e" stroke-width="1.1"/></svg>
<svg style="left:50px;top:3.5px" width="14" height="11" viewBox="0 0 14 11"><path d="M0 1.5 H7.5 L8.5 0 H14 V11 H0 Z" fill="#dcb67a"/><path d="M8 1.8 H13.2" stroke="#f3e3c0" stroke-width="1"/></svg>
<div class="t" id="tr7" style="left:69px"><span class="l">Ping</span></div>
</div>
<div class="tree" style="top:320px">
<svg style="left:29px;top:5.5px" width="7" height="7" viewBox="0 0 7 7"><path d="M6.4 0.2 V6.4 H0.2 Z" fill="#1e1e1e"/></svg>
<svg style="left:50px;top:3.5px" width="14" height="11" viewBox="0 0 14 11"><path d="M0.5 1.5 H8 L9 0.5 H13.5 V10.5 H0.5 Z" fill="#fbf3e3" stroke="#dcb67a"/><path d="M0 11 L2.5 5 H11.5 L9.5 11 Z" fill="#dcb67a"/></svg>
<div class="t" id="tr8" style="left:69px"><span class="l">Repositories</span></div>
</div>
<div class="tree" style="top:339px">
<svg style="left:47px;top:4px" width="6" height="9" viewBox="0 0 6 9"><path d="M0.7 0.9 V8.1 L4.8 4.5 Z" fill="#f5f5f5" stroke="#1e1e1e" stroke-width="1.1"/></svg>
<svg style="left:68px;top:3.5px" width="14" height="11" viewBox="0 0 14 11"><path d="M0 1.5 H7.5 L8.5 0 H14 V11 H0 Z" fill="#dcb67a"/><path d="M8 1.8 H13.2" stroke="#f3e3c0" stroke-width="1"/></svg>
<div class="t" id="tr9" style="left:87px"><span class="l">IRepository</span></div>
</div>
<div class="tree" style="top:358px">
<svg style="left:47px;top:5.5px" width="7" height="7" viewBox="0 0 7 7"><path d="M6.4 0.2 V6.4 H0.2 Z" fill="#1e1e1e"/></svg>
<svg style="left:68px;top:3.5px" width="14" height="11" viewBox="0 0 14 11"><path d="M0.5 1.5 H8 L9 0.5 H13.5 V10.5 H0.5 Z" fill="#fbf3e3" stroke="#dcb67a"/><path d="M0 11 L2.5 5 H11.5 L9.5 11 Z" fill="#dcb67a"/></svg>
<div class="t" id="tr10" style="left:87px"><span class="l">Repository</span></div>
</div>
<div class="tree" style="top:377px">
<svg style="left:65px;top:4px" width="6" height="9" viewBox="0 0 6 9"><path d="M0.7 0.9 V8.1 L4.8 4.5 Z" fill="#f5f5f5" stroke="#1e1e1e" stroke-width="1.1"/></svg>
<svg style="left:77px;top:6px" width="5.5" height="7" viewBox="0 0 6 8"><path d="M1.4 3.6 V2.4 Q1.4 0.7 3 0.7 Q4.6 0.7 4.6 2.4 V3.6" fill="none" stroke="#3a9bd8" stroke-width="1.2"/><rect x="0" y="3.3" width="6" height="4.7" fill="#3a9bd8"/><rect x="2.1" y="4.8" width="1.8" height="1.8" fill="#f5f5f5"/></svg>
<svg style="left:86px;top:3px" width="13" height="12" viewBox="0 0 13 12"><text x="6" y="9.5" font-family="Liberation Sans,sans-serif" font-size="9.2" font-weight="bold" text-anchor="middle" fill="#388a34" letter-spacing="-0.3">C#</text></svg>
<div class="t" id="tr11" style="left:105px"><span class="l">CategoryRepository.cs</span></div>
</div>
<div class="tree" style="top:396px">
<svg style="left:65px;top:4px" width="6" height="9" viewBox="0 0 6 9"><path d="M0.7 0.9 V8.1 L4.8 4.5 Z" fill="#f5f5f5" stroke="#1e1e1e" stroke-width="1.1"/></svg>
<svg style="left:77px;top:6px" width="5.5" height="7" viewBox="0 0 6 8"><path d="M1.4 3.6 V2.4 Q1.4 0.7 3 0.7 Q4.6 0.7 4.6 2.4 V3.6" fill="none" stroke="#3a9bd8" stroke-width="1.2"/><rect x="0" y="3.3" width="6" height="4.7" fill="#3a9bd8"/><rect x="2.1" y="4.8" width="1.8" height="1.8" fill="#f5f5f5"/></svg>
<svg style="left:86px;top:3px" width="13" height="12" viewBox="0 0 13 12"><text x="6" y="9.5" font-family="Liberation Sans,sans-serif" font-size="9.2" font-weight="bold" text-anchor="middle" fill="#388a34" letter-spacing="-0.3">C#</text></svg>
<div class="t" id="tr12" style="left:105px"><span class="l">CommentRepository.cs</span></div>
</div>
<div class="tree" style="top:415px">
<svg style="left:65px;top:4px" width="6" height="9" viewBox="0 0 6 9"><path d="M0.7 0.9 V8.1 L4.8 4.5 Z" fill="#f5f5f5" stroke="#1e1e1e" stroke-width="1.1"/></svg>
<svg style="left:77px;top:6px" width="5.5" height="7" viewBox="0 0 6 8"><path d="M1.4 3.6 V2.4 Q1.4 0.7 3 0.7 Q4.6 0.7 4.6 2.4 V3.6" fill="none" stroke="#3a9bd8" stroke-width="1.2"/><rect x="0" y="3.3" width="6" height="4.7" fill="#3a9bd8"/><rect x="2.1" y="4.8" width="1.8" height="1.8" fill="#f5f5f5"/></svg>
<svg style="left:86px;top:3px" width="13" height="12" viewBox="0 0 13 12"><text x="6" y="9.5" font-family="Liberation Sans,sans-serif" font-size="9.2" font-weight="bold" text-anchor="middle" fill="#388a34" letter-spacing="-0.3">C#</text></svg>
<div class="t" id="tr13" style="left:105px"><span class="l">LinkRepository.cs</span></div>
</div>
<div class="tree" style="top:434px;background:#cccedb">
<svg style="left:65px;top:4px" width="6" height="9" viewBox="0 0 6 9"><path d="M0.7 0.9 V8.1 L4.8 4.5 Z" fill="#f5f5f5" stroke="#1e1e1e" stroke-width="1.1"/></svg>
<svg style="left:77px;top:6px" width="5.5" height="7" viewBox="0 0 6 8"><path d="M1.4 3.6 V2.4 Q1.4 0.7 3 0.7 Q4.6 0.7 4.6 2.4 V3.6" fill="none" stroke="#3a9bd8" stroke-width="1.2"/><rect x="0" y="3.3" width="6" height="4.7" fill="#3a9bd8"/><rect x="2.1" y="4.8" width="1.8" height="1.8" fill="#f5f5f5"/></svg>
<svg style="left:86px;top:3px" width="13" height="12" viewBox="0 0 13 12"><text x="6" y="9.5" font-family="Liberation Sans,sans-serif" font-size="9.2" font-weight="bold" text-anchor="middle" fill="#388a34" letter-spacing="-0.3">C#</text></svg>
<div class="t" id="tr14" style="left:105px"><span class="l">PostRepository.cs</span></div>
</div>
<div class="tree" style="top:453px">
<svg style="left:65px;top:4px" width="6" height="9" viewBox="0 0 6 9"><path d="M0.7 0.9 V8.1 L4.8 4.5 Z" fill="#f5f5f5" stroke="#1e1e1e" stroke-width="1.1"/></svg>
<svg style="left:77px;top:6px" width="5.5" height="7" viewBox="0 0 6 8"><path d="M1.4 3.6 V2.4 Q1.4 0.7 3 0.7 Q4.6 0.7 4.6 2.4 V3.6" fill="none" stroke="#3a9bd8" stroke-width="1.2"/><rect x="0" y="3.3" width="6" height="4.7" fill="#3a9bd8"/><rect x="2.1" y="4.8" width="1.8" height="1.8" fill="#f5f5f5"/></svg>
<svg style="left:86px;top:3px" width="13" height="12" viewBox="0 0 13 12"><text x="6" y="9.5" font-family="Liberation Sans,sans-serif" font-size="9.2" font-weight="bold" text-anchor="middle" fill="#388a34" letter-spacing="-0.3">C#</text></svg>
<div class="t" id="tr15" style="left:105px"><span class="l">SiteRepository.cs</span></div>
</div>
<div class="tree" style="top:472px">
<svg style="left:65px;top:4px" width="6" height="9" viewBox="0 0 6 9"><path d="M0.7 0.9 V8.1 L4.8 4.5 Z" fill="#f5f5f5" stroke="#1e1e1e" stroke-width="1.1"/></svg>
<svg style="left:77px;top:6px" width="5.5" height="7" viewBox="0 0 6 8"><path d="M1.4 3.6 V2.4 Q1.4 0.7 3 0.7 Q4.6 0.7 4.6 2.4 V3.6" fill="none" stroke="#3a9bd8" stroke-width="1.2"/><rect x="0" y="3.3" width="6" height="4.7" fill="#3a9bd8"/><rect x="2.1" y="4.8" width="1.8" height="1.8" fill="#f5f5f5"/></svg>
<svg style="left:86px;top:3px" width="13" height="12" viewBox="0 0 13 12"><text x="6" y="9.5" font-family="Liberation Sans,sans-serif" font-size="9.2" font-weight="bold" text-anchor="middle" fill="#388a34" letter-spacing="-0.3">C#</text></svg>
<div class="t" id="tr16" style="left:105px"><span class="l">TagRepository.cs</span></div>
</div>
<div class="tree" style="top:491px">
<svg style="left:65px;top:4px" width="6" height="9" viewBox="0 0 6 9"><path d="M0.7 0.9 V8.1 L4.8 4.5 Z" fill="#f5f5f5" stroke="#1e1e1e" stroke-width="1.1"/></svg>
<svg style="left:77px;top:6px" width="5.5" height="7" viewBox="0 0 6 8"><path d="M1.4 3.6 V2.4 Q1.4 0.7 3 0.7 Q4.6 0.7 4.6 2.4 V3.6" fill="none" stroke="#3a9bd8" stroke-width="1.2"/><rect x="0" y="3.3" width="6" height="4.7" fill="#3a9bd8"/><rect x="2.1" y="4.8" width="1.8" height="1.8" fill="#f5f5f5"/></svg>
<svg style="left:86px;top:3px" width="13" height="12" viewBox="0 0 13 12"><text x="6" y="9.5" font-family="Liberation Sans,sans-serif" font-size="9.2" font-weight="bold" text-anchor="middle" fill="#388a34" letter-spacing="-0.3">C#</text></svg>
<div class="t" id="tr17" style="left:105px"><span class="l">UserRepository.cs</span></div>
</div>
<div class="tree" style="top:510px">
<svg style="left:29px;top:4px" width="6" height="9" viewBox="0 0 6 9"><path d="M0.7 0.9 V8.1 L4.8 4.5 Z" fill="#f5f5f5" stroke="#1e1e1e" stroke-width="1.1"/></svg>
<svg style="left:50px;top:3.5px" width="14" height="11" viewBox="0 0 14 11"><path d="M0 1.5 H7.5 L8.5 0 H14 V11 H0 Z" fill="#dcb67a"/><path d="M8 1.8 H13.2" stroke="#f3e3c0" stroke-width="1"/></svg>
<div class="t" id="tr18" style="left:69px"><span class="l">Services</span></div>
</div>
<div class="tree" style="top:529px">
<svg style="left:29px;top:4px" width="6" height="9" viewBox="0 0 6 9"><path d="M0.7 0.9 V8.1 L4.8 4.5 Z" fill="#f5f5f5" stroke="#1e1e1e" stroke-width="1.1"/></svg>
<svg style="left:50px;top:3.5px" width="14" height="11" viewBox="0 0 14 11"><path d="M0 1.5 H7.5 L8.5 0 H14 V11 H0 Z" fill="#dcb67a"/><path d="M8 1.8 H13.2" stroke="#f3e3c0" stroke-width="1"/></svg>
<div class="t" id="tr19" style="left:69px"><span class="l">Template</span></div>
</div>
<div class="tree" style="top:548px">
<svg style="left:29px;top:4px" width="6" height="9" viewBox="0 0 6 9"><path d="M0.7 0.9 V8.1 L4.8 4.5 Z" fill="#f5f5f5" stroke="#1e1e1e" stroke-width="1.1"/></svg>
<svg style="left:50px;top:3.5px" width="14" height="11" viewBox="0 0 14 11"><path d="M0 1.5 H7.5 L8.5 0 H14 V11 H0 Z" fill="#dcb67a"/><path d="M8 1.8 H13.2" stroke="#f3e3c0" stroke-width="1"/></svg>
<div class="t" id="tr20" style="left:69px"><span class="l">XmlRpc</span></div>
</div>
<div class="tree" style="top:567px">
<svg style="left:11px;top:4px" width="6" height="9" viewBox="0 0 6 9"><path d="M0.7 0.9 V8.1 L4.8 4.5 Z" fill="#f5f5f5" stroke="#1e1e1e" stroke-width="1.1"/></svg>
<svg style="left:24px;top:6px" width="5.5" height="7" viewBox="0 0 6 8"><path d="M1.4 3.6 V2.4 Q1.4 0.7 3 0.7 Q4.6 0.7 4.6 2.4 V3.6" fill="none" stroke="#3a9bd8" stroke-width="1.2"/><rect x="0" y="3.3" width="6" height="4.7" fill="#3a9bd8"/><rect x="2.1" y="4.8" width="1.8" height="1.8" fill="#f5f5f5"/></svg>
<svg style="left:30px;top:3px" width="15" height="13" viewBox="0 0 15 13"><rect x="1.7" y="0.7" width="12.6" height="10.6" fill="#f4faf4" stroke="#3a7a3a" stroke-width="1.3"/><text x="8" y="9.3" font-family="Liberation Sans,sans-serif" font-size="9" text-anchor="middle" fill="#222" letter-spacing="-0.3">C#</text></svg>
<div class="t" id="tr21" style="left:51px"><span class="l">Jqpress.Framework</span></div>
</div>
<div class="tree" style="top:586px">
<svg style="left:11px;top:4px" width="6" height="9" viewBox="0 0 6 9"><path d="M0.7 0.9 V8.1 L4.8 4.5 Z" fill="#f5f5f5" stroke="#1e1e1e" stroke-width="1.1"/></svg>
<svg style="left:24px;top:6px" width="5.5" height="7" viewBox="0 0 6 8"><path d="M1.4 3.6 V2.4 Q1.4 0.7 3 0.7 Q4.6 0.7 4.6 2.4 V3.6" fill="none" stroke="#3a9bd8" stroke-width="1.2"/><rect x="0" y="3.3" width="6" height="4.7" fill="#3a9bd8"/><rect x="2.1" y="4.8" width="1.8" height="1.8" fill="#f5f5f5"/></svg>
<svg style="left:30px;top:2px" width="15" height="15" viewBox="0 0 15 15"><path d="M1.6 4 V1.8 H13.7 V12.3 H10.4" fill="none" stroke="#333" stroke-width="1.2"/><path d="M1 2 H14.3" stroke="#333" stroke-width="2.6"/><circle cx="5.2" cy="9.6" r="4.6" fill="#2e8b2e"/><path d="M3.8 5.8 V13.4 M6.6 5.8 V13.4 M1.2 8.2 H9.2 M1.2 11 H9.2" stroke="#fff" stroke-width="0.9" opacity="0.85"/><circle cx="5.2" cy="9.6" r="4.2" fill="none" stroke="#2e8b2e" stroke-width="1"/></svg>
<div class="t" id="tr22" style="left:51px"><span class="l">Jqpress.Web</span></div>
</div>
<div class="a" style="left:1053px;top:648px;width:92px;height:23px;background:#f5f5f5;border:1px solid #cccedb;border-top:none"></div>
<div class="t" id="setab0" style="left:1058px;top:653px;color:#0e70c0">解决方案资源<span class="l">...</span></div>
<div class="t" id="setab1" style="left:1151px;top:653px;color:#444">团队资源管理器</div>
<div class="t" id="setab2" style="left:1245px;top:653px;color:#444">服务器资源管<span class="l">...</span></div>
<div class="a" style="left:1360px;top:88px;width:6px;height:48px;background:#cccedb"></div>
<div class="a" style="left:1360px;top:148px;width:6px;height:24px;background:#cccedb"></div>
<div class="t" style="left:1356px;top:88px;transform-origin:0 0;transform:rotate(90deg);color:#444;letter-spacing:-0.3px">诊断工具</div>
<div class="t" style="left:1356px;top:148px;transform-origin:0 0;transform:rotate(90deg);color:#444;letter-spacing:-0.3px">属性</div>
<svg style="left:1326px;top:610px" width="40" height="80" viewBox="1326 610 40 80"><path d="M1366 625.6 H1346 Q1341.4 625.6 1341.4 630 V659 Q1341.4 661.5 1343.5 662.8 L1366 677 Z" fill="#fff"/><path d="M1342.5 662 L1366 677" stroke="#444" stroke-width="0.8" stroke-dasharray="1.2 1.6" fill="none"/><rect x="1345" y="631.2" width="20" height="19.6" fill="#1b8fe3"/><circle cx="1355" cy="641" r="8.6" fill="#fff"/><path d="M1347.8 641 L1352 637.6 V639.8 H1358 V637.6 L1362.2 641 L1358 644.4 V642.2 H1352 V644.4 Z" fill="#1b8fe3"/></svg>
<div class="t" id="bt0" style="left:6px;top:678px;color:#444">程序包管理器控制台</div>
<div class="a" style="left:6px;top:697px;width:108px;height:6px;background:#cccedb"></div>
<div class="t" id="bt1" style="left:126px;top:678px;color:#444">错误列表</div>
<div class="a" style="left:126px;top:697px;width:48px;height:6px;background:#cccedb"></div>
<div class="t" id="bt2" style="left:186px;top:678px;color:#444">命令窗口</div>
<div class="a" style="left:186px;top:697px;width:48px;height:6px;background:#cccedb"></div>
<div class="t" id="bt3" style="left:246px;top:678px;color:#444">输出</div>
<div class="a" style="left:246px;top:697px;width:24px;height:6px;background:#cccedb"></div>
<div class="t" id="bt4" style="left:282px;top:678px;color:#444"><span class="l">Web </span>发布活动</div>
<div class="a" style="left:282px;top:697px;width:80px;height:6px;background:#cccedb"></div>
<div class="a" style="left:0;top:703px;width:1366px;height:25px;background:#007acc"></div>
<div class="sb">
<div class="t" id="sb0" style="left:4px">就绪</div>
<div class="t" id="sb1" style="left:606px">行<span class="l"> 1</span></div>
<div class="t" id="sb2" style="left:698px">列<span class="l"> 1</span></div>
<div class="t" id="sb3" style="left:790px">字符<span class="l"> 1</span></div>
<div class="t" id="sb4" style="left:926px"><span class="l">Ins</span></div>
<div class="t" id="sb5" style="left:1076px"><span class="l">0</span></div>
<div class="t" id="sb6" style="left:1127px"><span class="l">2</span></div>
<div class="t" id="sb7" style="left:1177px"><span class="l">jqpress.cms</span></div>
<div class="t" id="sb8" style="left:1291px"><span class="l">master</span></div>
</div>
<svg style="left:1058px;top:710px" width="9" height="11" viewBox="0 0 9 11"><path d="M4.5 1 V10.5 M0.8 5 L4.5 1.2 L8.2 5" fill="none" stroke="#fff" stroke-width="1.8"/></svg>
<svg style="left:1107px;top:709px" width="13" height="13" viewBox="0 0 13 13"><path d="M1 12 L1.8 8.5 L8.5 1.8 L11.2 4.5 L4.5 11.2 Z" fill="#fff"/><path d="M9.3 1 L10.3 0 L13 2.7 L12 3.7 Z" fill="#fff"/></svg>
<svg style="left:1157px;top:708px" width="15" height="15" viewBox="0 0 15 15"><path d="M7.5 0.3 L14.7 7.5 L7.5 14.7 L0.3 7.5 Z" fill="#fff"/><path d="M5.5 4 L8 6.5 V11 M8 6.5 L10.2 8.5" fill="none" stroke="#007acc" stroke-width="1.3"/><circle cx="8" cy="11" r="1.2" fill="#007acc"/><circle cx="10.4" cy="8.6" r="1.2" fill="#007acc"/></svg>
<svg style="left:1270px;top:709px" width="15" height="14" viewBox="0 0 15 14"><path d="M2.5 2.5 L7.5 7.5 L12.5 2.5 M7.5 7 V13.5" fill="none" stroke="#fff" stroke-width="2.2"/><circle cx="2.5" cy="2.5" r="2.2" fill="#fff"/><circle cx="12.5" cy="2.5" r="2.2" fill="#fff"/></svg>
<svg style="left:1337px;top:713px" width="8" height="5" viewBox="0 0 8 5"><path d="M0 5 H8 L4 0 Z" fill="#fff"/></svg>
<div class="a" style="left:0;top:728px;width:1366px;height:8px;background:#0a0a0a"></div>
<div class="a" style="left:0;top:729px;width:1351px;height:1px;background:#7d7d7d"></div>
<div class="a" style="left:11px;top:730px;width:34px;height:34px;border-radius:17px;background:radial-gradient(circle at 50% 40%,#b8c8d8,#5a6d82)"></div>
<div class="a" style="left:138px;top:730px;width:57px;height:10px;border:1px solid #777;border-radius:2px;background:linear-gradient(#6a6a6a,#3c3c3c)"></div>
<div class="a" style="left:158px;top:733px;width:22px;height:8px;border-radius:6px 6px 0 0;background:#d0402a"></div>
<div class="a" style="left:200px;top:730px;width:52px;height:10px;border:1px solid #777;border-radius:2px;background:linear-gradient(#6a6a6a,#3c3c3c)"></div>
<div class="a" style="left:218px;top:733px;width:22px;height:8px;border-radius:6px 6px 0 0;background:#3a9bf0"></div>
<div class="a" style="left:262px;top:730px;width:50px;height:10px;border:1px solid #777;border-radius:2px;background:linear-gradient(#6a6a6a,#3c3c3c)"></div>
<div class="a" style="left:279px;top:733px;width:22px;height:8px;border-radius:6px 6px 0 0;background:#c9a050"></div>
<div class="a" style="left:324px;top:730px;width:58px;height:10px;border:1px solid #777;border-radius:2px;background:linear-gradient(#6a6a6a,#3c3c3c)"></div>
<div class="a" style="left:345px;top:733px;width:22px;height:8px;border-radius:6px 6px 0 0;background:#6a4aa0"></div>
<div class="a" style="left:1351px;top:729px;width:15px;height:7px;background:linear-gradient(#8a8a8a,#4a4a4a);border-left:1px solid #999"></div>
<div class="t" style="left:1299px;top:733px;color:#fff;font-size:13px"><span class="l">10:36</span></div>
</body></html>
